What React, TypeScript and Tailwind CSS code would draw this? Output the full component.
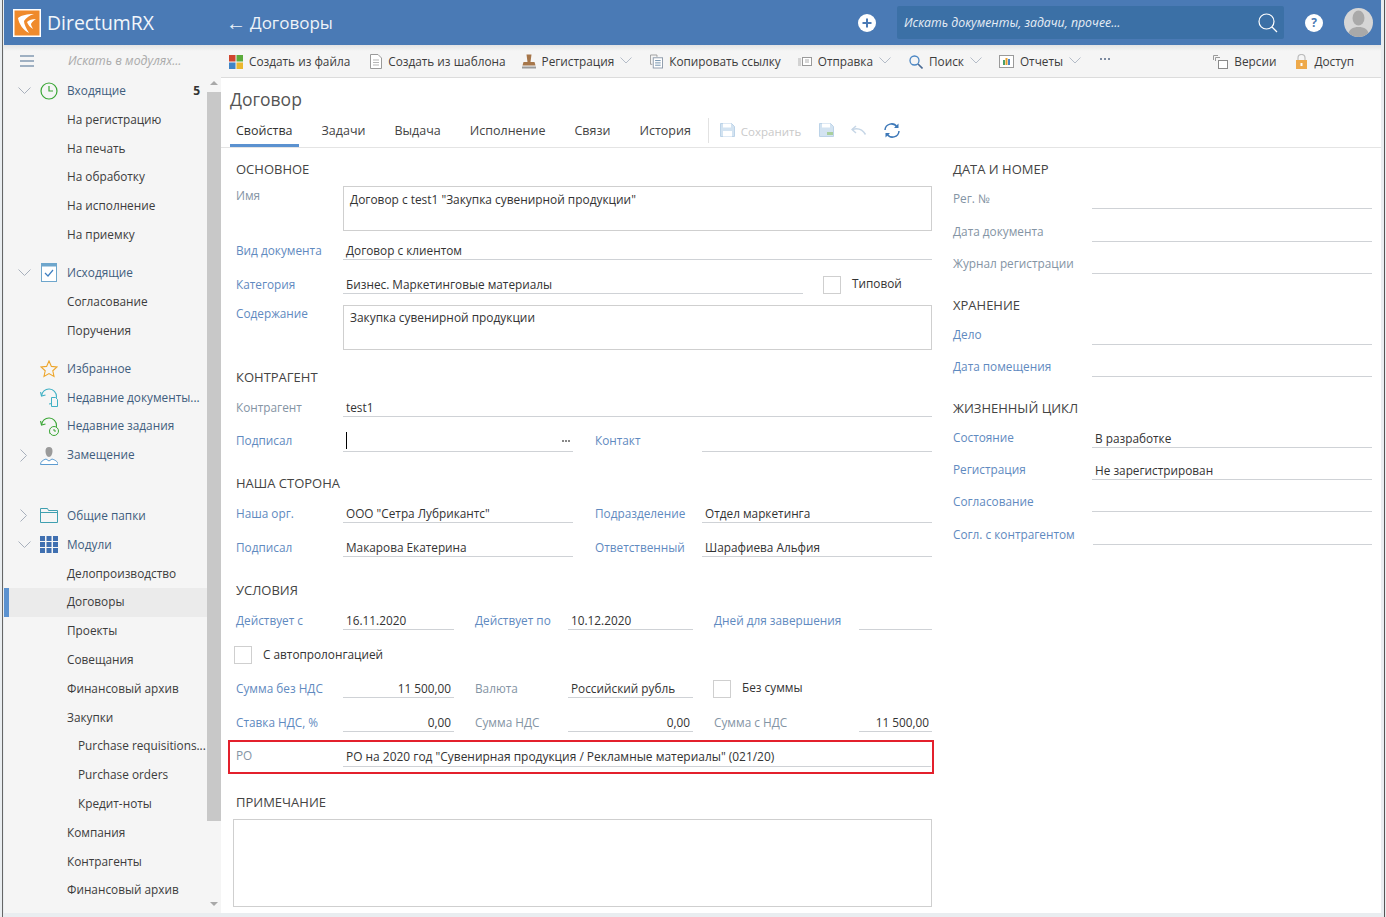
import React from "react";

const Chev = () => <svg width="12" height="7" viewBox="0 0 12 7" className="shrink-0"><path d="M0.5 0.5 6 6l5.5-5.5" fill="none" stroke="#b4bcc8" strokeWidth="1" /></svg>;
const Down = () => <svg width="13" height="8" viewBox="0 0 13 8" className="shrink-0"><path d="M0.5 0.5 6.5 6.5l6-6" fill="none" stroke="#a8b0bc" strokeWidth="1" /></svg>;
const Right = () => <svg width="8" height="13" viewBox="0 0 8 13" className="shrink-0"><path d="M0.5 0.5 6.5 6.5l-6 6" fill="none" stroke="#a8b0bc" strokeWidth="1" /></svg>;

const ICONS: Record<string, React.ReactNode> = {
  clock: <svg width="18" height="18" viewBox="0 0 18 18"><circle cx="9" cy="9" r="8" fill="none" stroke="#3aa635" strokeWidth="1.2" /><path d="M9 4v5h4" fill="none" stroke="#3aa635" strokeWidth="1.2" /></svg>,
  out: <svg width="16" height="19" viewBox="0 0 16 19" className="ml-[1px]"><rect x="0.5" y="0.5" width="15" height="18" fill="#fff" stroke="#6ea6cc" /><rect x="0.5" y="0.5" width="15" height="3" fill="#6ea6cc" /><path d="M4 10l3 3 5-6" fill="none" stroke="#3f7fc0" strokeWidth="1.2" /></svg>,
  star: <svg width="18" height="18" viewBox="0 0 18 18"><path d="M9 1l2.4 5.4 5.6.6-4.2 3.8 1.2 5.7L9 13.6l-5 2.9 1.2-5.7L1 7l5.6-.6z" fill="none" stroke="#eda52a" strokeWidth="1.1" /></svg>,
  recentDoc: <svg width="19" height="19" viewBox="0 0 19 19"><path d="M1.5 8A7.5 7.5 0 1 1 9 16" fill="none" stroke="#3fb0c4" strokeWidth="1.1" /><path d="M0.5 4l1 4 4-1" fill="none" stroke="#3fb0c4" strokeWidth="1.1" /><path d="M11.5 9.5h4l2 2v7h-6z" fill="#f5f5f5" stroke="#3fb0c4" /></svg>,
  recentTask: <svg width="19" height="19" viewBox="0 0 19 19"><path d="M1.5 8A7.5 7.5 0 1 1 9 16" fill="none" stroke="#3aa635" strokeWidth="1.1" /><path d="M0.5 4l1 4 4-1" fill="none" stroke="#3aa635" strokeWidth="1.1" /><circle cx="14" cy="14" r="4.5" fill="#f5f5f5" stroke="#3aa635" /><path d="M14 12v2h2" fill="none" stroke="#3aa635" /></svg>,
  person: <svg width="18" height="19" viewBox="0 0 18 19"><path d="M5.5 5a3.5 4 0 0 1 7 0c0 3-1.5 6-3.5 6S5.500 8 5.500 5z" fill="#9a9a9a" /><path d="M0.5 18.500c0-3 2.500-4.500 5.500-5.500l3 2 3-2c3 1 6 2.500 6 5.500z" fill="#fff" stroke="#5c9bd0" /></svg>,
  folder: <svg width="18" height="15" viewBox="0 0 18 15"><path d="M0.500 0.500h7l1 2h9v12H0.500z" fill="none" stroke="#3f9fb0" /><path d="M0.500 4.500h17" stroke="#3f9fb0" /></svg>,
  grid: <svg width="18" height="17" viewBox="0 0 18 17" fill="#3f6fb0"><rect width="5" height="5" /><rect x="6.500" width="5" height="5" /><rect x="13" width="5" height="5" /><rect y="6" width="5" height="5" /><rect x="6.500" y="6" width="5" height="5" /><rect x="13" y="6" width="5" height="5" /><rect y="12" width="5" height="5" /><rect x="6.500" y="12" width="5" height="5" /><rect x="13" y="12" width="5" height="5" /></svg>,
};

function Nav({ label, icon, arrow, indent = 0, badge, active, cls = "" }: { label: string; icon?: string; arrow?: "d" | "r"; indent?: number; badge?: string; active?: boolean; cls?: string }) {
  return (
    <div className={`relative flex h-[28.8px] shrink-0 items-center ${active ? "bg-[#ebebeb]" : ""} ${cls}`}>
      {active && <div className="absolute left-0 top-0 h-full w-[5px] bg-[#5b92d0]" />}
      <div className="flex w-[35px] shrink-0 justify-center pl-[5px]">{arrow === "d" ? <Down /> : arrow === "r" ? <Right /> : null}</div>
      <div className="flex w-[28px] shrink-0 justify-start pl-[1px]">{icon ? ICONS[icon] : null}</div>
      <span className={`whitespace-nowrap text-[11.8px] ${icon ? "text-[#3f5d7d]" : "text-[#3c3c3c]"} ${indent ? "pl-[11px]" : ""}`}>{label}</span>
      {badge && <span className="absolute right-[7px] text-[12px] font-bold text-[#333]">{badge}</span>}
    </div>
  );
}

function Sidebar() {
  return (
    <div className="flex w-[217px] shrink-0 flex-col overflow-hidden bg-[#f5f5f5]">
      <div className="flex h-[31.4px] shrink-0 items-center bg-[linear-gradient(#e4e4e4,#f5f5f5_6px)]">
        <div className="flex w-[35px] justify-center pl-[10px]"><svg width="14" height="12" viewBox="0 0 14 12" fill="#9fb0c2"><rect width="14" height="2" /><rect y="5" width="14" height="2" /><rect y="10" width="14" height="2" /></svg></div>
        <span className="pl-[29px] pt-[1px] text-[12.300px] italic text-[#ababab]">Искать в модулях...</span>
      </div>
      <div className="flex min-h-0 flex-1">
        <div className="flex w-[203px] flex-col overflow-hidden">
          <Nav label="Входящие" icon="clock" arrow="d" badge="5" />
          <Nav label="На регистрацию" />
          <Nav label="На печать" />
          <Nav label="На обработку" />
          <Nav label="На исполнение" />
          <Nav label="На приемку" />
          <Nav label="Исходящие" icon="out" arrow="d" cls="mt-[9.200px]" />
          <Nav label="Согласование" />
          <Nav label="Поручения" />
          <Nav label="Избранное" icon="star" cls="mt-[9.600px]" />
          <Nav label="Недавние документы..." icon="recentDoc" />
          <Nav label="Недавние задания" icon="recentTask" />
          <Nav label="Замещение" icon="person" arrow="r" />
          <Nav label="Общие папки" icon="folder" arrow="r" cls="mt-[32px]" />
          <Nav label="Модули" icon="grid" arrow="d" />
          <Nav label="Делопроизводство" />
          <Nav label="Договоры" active />
          <Nav label="Проекты" />
          <Nav label="Совещания" />
          <Nav label="Финансовый архив" />
          <Nav label="Закупки" />
          <Nav label="Purchase requisitions..." indent={1} />
          <Nav label="Purchase orders" indent={1} />
          <Nav label="Кредит-ноты" indent={1} />
          <Nav label="Компания" />
          <Nav label="Контрагенты" />
          <Nav label="Финансовый архив" />
        </div>
        <div className="flex w-[14px] shrink-0 flex-col items-center pt-[5px]">
          <div className="h-0 w-0 border-x-[4px] border-b-[4px] border-x-transparent border-b-[#a8a8a8]" />
          <div className="mt-[7px] h-[729px] w-[14px] bg-[#c8c8c8]" />
          <div className="mt-[81px] h-0 w-0 border-x-[4px] border-t-[4px] border-x-transparent border-t-[#a8a8a8]" />
        </div>
      </div>
    </div>
  );
}

function Tool({ icon, label, chev, cls = "" }: { icon: React.ReactNode; label: string; chev?: boolean; cls?: string }) {
  return (
    <div className={`flex shrink-0 items-center ${cls}`}>
      {icon}
      <span className="ml-[6px] pt-[1px] text-[11.8px] text-[#3c3c3c]">{label}</span>
      {chev && <span className="ml-[6px] -mt-[2px]"><Chev /></span>}
    </div>
  );
}

function Toolbar() {
  return (
    <div className="flex h-[33px] shrink-0 items-center border-b border-[#dcdcdc] bg-[linear-gradient(#e4e4e4,#f5f5f5_6px)] pl-[8px] pr-[27px] pt-[1px]">
      <Tool label="Создать из файла" icon={<svg width="14" height="14" viewBox="0 0 14 14"><rect width="6.500" height="6.500" fill="#d0452e" /><rect x="7.500" width="6.500" height="6.500" fill="#5bab3c" /><rect y="7.500" width="6.500" height="6.500" fill="#3f84c6" /><rect x="7.500" y="7.500" width="6.500" height="6.500" fill="#eab72d" /></svg>} />
      <Tool cls="ml-[20px]" label="Создать из шаблона" icon={<svg width="12" height="15" viewBox="0 0 12 15"><path d="M0.500 0.500h7.500l3.500 3.500v10.500H0.500z" fill="#fff" stroke="#9a9a9a" /><path d="M3 6h6M3 8.500h6M3 11h6" stroke="#b5b5b5" /></svg>} />
      <Tool cls="ml-[16px]" chev label="Регистрация" icon={<svg width="14" height="15" viewBox="0 0 14 15"><path d="M4.500 0.500h5L8.500 8h4l1 3.500H0.500L1.500 8h4z" fill="#a6764a" /><rect y="12.500" width="14" height="2" fill="#9a9a9a" /></svg>} />
      <Tool cls="ml-[18px]" label="Копировать ссылку" icon={<svg width="13" height="15" viewBox="0 0 14 15"><path d="M0.500 0.500h7v2" fill="none" stroke="#9a9a9a" /><path d="M0.500 0.500v10h2" fill="none" stroke="#9a9a9a" /><rect x="3.500" y="3.500" width="10" height="11" fill="#fff" stroke="#8a98a8" /><path d="M5.500 6.500h6M5.500 9h6M5.500 11.500h6" stroke="#6a8aa8" /></svg>} />
      <Tool cls="ml-[17px]" chev label="Отправка" icon={<svg width="14" height="10" viewBox="0 0 14 10"><rect x="4.500" y="0.500" width="9" height="8" fill="#fff" stroke="#9a9a9a" /><path d="M7 3h4M7 5h4" stroke="#b0b0b0" /><path d="M0 2h3M0 4h3M0 6h3M0 8h3" stroke="#b0b0b0" /></svg>} />
      <Tool cls="ml-[18px]" chev label="Поиск" icon={<svg width="14" height="14" viewBox="0 0 14 14"><circle cx="5.500" cy="5.500" r="4.500" fill="none" stroke="#4a86c4" strokeWidth="1.300" /><path d="M9 9l4.500 4.500" stroke="#4a6a94" strokeWidth="1.600" /></svg>} />
      <Tool cls="ml-[17px]" chev label="Отчеты" icon={<svg width="15" height="13" viewBox="0 0 15 13"><rect x="0.500" y="0.500" width="14" height="12" fill="#fff" stroke="#9a9a9a" /><rect x="4" y="5" width="2" height="5" fill="#4a9f6a" /><rect x="6.500" y="3" width="2" height="7" fill="#e8a02c" /><rect x="9" y="4" width="2" height="6" fill="#4a86c4" /></svg>} />
      <span className="ml-[19px] flex h-[12px] w-[12px] items-start gap-[2px] pt-[2px]"><i className="h-[2px] w-[2px] bg-[#7c8aa0]" /><i className="h-[2px] w-[2px] bg-[#7c8aa0]" /><i className="h-[2px] w-[2px] bg-[#7c8aa0]" /></span>
      <div className="flex-1" />
      <Tool label="Версии" icon={<svg width="15" height="14" viewBox="0 0 15 14"><path d="M0.500 5V0.500H5M2.500 6V2.500H7" fill="none" stroke="#9a9a9a" /><rect x="5.500" y="5.500" width="9" height="8" fill="#fff" stroke="#8a8a8a" /></svg>} />
      <Tool cls="ml-[19px]" label="Доступ" icon={<svg width="13" height="15" viewBox="0 0 13 15"><path d="M3 7V4a3.500 3.500 0 0 1 7 0v3" fill="none" stroke="#bdbdbd" strokeWidth="1.200" /><rect x="1" y="6" width="11" height="9" fill="#eea94a" /><rect x="5.500" y="9" width="2" height="3" fill="#fff" /></svg>} />
    </div>
  );
}

const Title = ({ children, cls = "" }: { children: React.ReactNode; cls?: string }) => <div className={`h-[20px] text-[13px] leading-[20px] text-[#444] ${cls}`}>{children}</div>;

const LBLUE = "text-[#5f8ac0]";
const LGRAY = "text-[#8494a4]";

function Lbl({ t, w, link, cls = "" }: { t: string; w: number; link?: boolean; cls?: string }) {
  return <div className={`shrink-0 text-[11.800px] leading-[21px] ${link ? LBLUE : LGRAY} ${cls}`} style={{ width: w }}>{t}</div>;
}

function LblR({ t, w, link }: { t: string; w: number; link?: boolean }) {
  return <div className={`shrink-0 text-[11.800px] leading-[19px] ${link ? LBLUE : LGRAY}`} style={{ width: w }}>{t}</div>;
}

function Val({ t, grow, w, right, cursor, dots, size = "text-[11.800px]" }: { t?: string; grow?: boolean; w?: number; right?: boolean; cursor?: boolean; dots?: boolean; size?: string }) {
  return (
    <div className={`relative h-[20px] border-b border-[#cfd2d6] px-[3px] leading-[20px] text-[#333] ${size} ${grow ? "min-w-0 flex-1" : "shrink-0"} ${right ? "text-right" : ""}`} style={w ? { width: w } : undefined}>
      {t}
      {cursor && <span className="absolute left-[3px] top-0 h-[17px] w-px bg-black" />}
      {dots && <span className="absolute right-[3px] top-[8px] flex gap-[1px]"><i className="h-[2px] w-[2px] bg-[#888]" /><i className="h-[2px] w-[2px] bg-[#888]" /><i className="h-[2px] w-[2px] bg-[#888]" /></span>}
    </div>
  );
}

const Row = ({ mt, children }: { mt: string; children: React.ReactNode }) => <div className={`flex h-[20px] ${mt}`}>{children}</div>;
const Box = () => <div className="h-[18px] w-[18px] shrink-0 border border-[#cfcfcf] bg-white" />;

function Area({ t, py }: { t?: string; py: string }) {
  return <div className={`h-[45px] min-w-0 flex-1 border border-[#cfcfcf] px-[6px] text-[11.900px] leading-[18px] text-[#333] ${py}`}>{t}</div>;
}

function LeftCol() {
  return (
    <div className="w-[696px] shrink-0">
      <Title>ОСНОВНОЕ</Title>
      <div className="mt-[7px] flex"><Lbl t="Имя" w={107} cls="-mt-[1px]" /><Area t={'Договор с test1 "Закупка сувенирной продукции"'} py="py-[3px]" /></div>
      <Row mt="mt-[9px]"><Lbl t="Вид документа" w={107} link /><Val grow t="Договор с клиентом" /></Row>
      <Row mt="mt-[14px]"><Lbl t="Категория" w={107} link /><Val w={460} t="Бизнес. Маркетинговые материалы" /><div className="ml-[20px] flex items-end"><Box /></div><span className="ml-[11px] text-[11.800px] leading-[19px] text-[#333]">Типовой</span></Row>
      <div className="mt-[11px] flex"><Lbl t="Содержание" w={107} link cls="-mt-[2px]" /><Area t="Закупка сувенирной продукции" py="py-[2px]" /></div>
      <Title cls="mt-[17px]">КОНТРАГЕНТ</Title>
      <Row mt="mt-[10px]"><Lbl t="Контрагент" w={107} /><Val grow t="test1" /></Row>
      <Row mt="mt-[15px]"><Lbl t="Подписал" w={107} link cls="-mt-[2px]" /><Val w={230} cursor dots /><Lbl t="Контакт" w={107} link cls="ml-[22px] -mt-[2px]" /><Val grow /></Row>
      <Title cls="mt-[21px]">НАША СТОРОНА</Title>
      <Row mt="mt-[10px]"><Lbl t="Наша орг." w={107} link /><Val w={230} t={'ООО "Сетра Лубрикантс"'} /><Lbl t="Подразделение" w={107} link cls="ml-[22px]" /><Val grow t="Отдел маркетинга" /></Row>
      <Row mt="mt-[14px]"><Lbl t="Подписал" w={107} link /><Val w={230} t="Макарова Екатерина" /><Lbl t="Ответственный" w={107} link cls="ml-[22px]" /><Val grow t="Шарафиева Альфия" /></Row>
      <Title cls="mt-[23px]">УСЛОВИЯ</Title>
      <Row mt="mt-[10px]"><Lbl t="Действует с" w={107} link /><Val w={111} t="16.11.2020" /><Lbl t="Действует по" w={93} cls="ml-[21px]" link /><Val w={125} t="10.12.2020" /><Lbl t="Дней для завершения" w={145} cls="ml-[21px]" link /><Val grow /></Row>
      <div className="mt-[16px] -ml-[2px] flex h-[18px] items-center"><Box /><span className="ml-[11px] text-[11.800px] text-[#333]">С автопролонгацией</span></div>
      <Row mt="mt-[14px]"><Lbl t="Сумма без НДС" w={107} link /><Val w={111} right t="11 500,00" /><Lbl t="Валюта" w={93} cls="ml-[21px]" /><Val w={125} t="Российский рубль" /><div className="ml-[20px] flex items-end"><Box /></div><span className="ml-[11px] text-[11.800px] leading-[19px] text-[#333]">Без суммы</span></Row>
      <Row mt="mt-[14px]"><Lbl t="Ставка НДС, %" w={107} link /><Val w={111} right t="0,00" /><Lbl t="Сумма НДС" w={93} cls="ml-[21px]" /><Val w={125} right t="0,00" /><Lbl t="Сумма с НДС" w={145} cls="ml-[21px]" /><Val grow right t="11 500,00" /></Row>
      <div className="mt-[8px] -ml-[8px] flex h-[34px] w-[706px] border-2 border-[#e3202c] pl-[6px] pr-[1px] pt-[5px]"><Lbl t="РО" w={107} cls="-mt-[2px]" /><Val grow size="text-[11.950px]" t={'РО на 2020 год "Сувенирная продукция / Рекламные материалы" (021/20)'} /></div>
      <Title cls="mt-[18px]">ПРИМЕЧАНИЕ</Title>
      <div className="mt-[7px] -ml-[3px] h-[88px] w-[699px] border border-[#cfcfcf]" />
    </div>
  );
}

const RVal = ({ t }: { t?: string }) => <Val grow t={t} />;

function RightCol() {
  return (
    <div className="ml-[21px] w-[419px] shrink-0">
      <Title>ДАТА И НОМЕР</Title>
      <Row mt="mt-[10px]"><LblR t="Рег. №" w={139} /><RVal /></Row>
      <Row mt="mt-[13px]"><LblR t="Дата документа" w={139} /><RVal /></Row>
      <Row mt="mt-[12px]"><LblR t="Журнал регистрации" w={139} /><RVal /></Row>
      <Title cls="mt-[21px]">ХРАНЕНИЕ</Title>
      <Row mt="mt-[10px]"><LblR t="Дело" w={139} link /><RVal /></Row>
      <Row mt="mt-[12px]"><LblR t="Дата помещения" w={139} link /><RVal /></Row>
      <Title cls="mt-[21px]">ЖИЗНЕННЫЙ ЦИКЛ</Title>
      <Row mt="mt-[10px]"><LblR t="Состояние" w={139} link /><RVal t="В разработке" /></Row>
      <Row mt="mt-[12px]"><LblR t="Регистрация" w={139} link /><RVal t="Не зарегистрирован" /></Row>
      <Row mt="mt-[12px]"><LblR t="Согласование" w={139} link /><RVal /></Row>
      <Row mt="mt-[13px]"><LblR t="Согл. с контрагентом" w={140} link /><RVal /></Row>
    </div>
  );
}

function Tab({ t, active, cls = "" }: { t: string; active?: boolean; cls?: string }) {
  return <div className={`flex h-[33px] items-center border-b-[3px] px-[6px] pt-[4px] text-[12.500px] ${active ? "border-[#5b92d0] text-[#333]" : "border-transparent text-[#444]"} ${cls}`}>{t}</div>;
}

function Main() {
  return (
    <div className="flex min-w-0 flex-1 flex-col bg-white">
      <Toolbar />
      <div className="pl-[9px] pt-[9px] text-[17.500px] leading-[24px] text-[#555]">Договор</div>
      <div className="mt-[3px] flex h-[34px] items-start border-b border-[#e4e4e4] pl-[9px]">
        <Tab t="Свойства" active />
        <Tab t="Задачи" cls="ml-[17px]" />
        <Tab t="Выдача" cls="ml-[17px]" />
        <Tab t="Исполнение" cls="ml-[17px]" />
        <Tab t="Связи" cls="ml-[17px]" />
        <Tab t="История" cls="ml-[17px]" />
        <div className="ml-[11px] mt-[4px] h-[25px] w-px bg-[#e2e2e2]" />
        <div className="flex h-[33px] items-center pb-[1px]">
          <svg className="ml-[11px]" width="15" height="14" viewBox="0 0 15 14"><path d="M0.500 0.500h11l3 3v10H0.500z" fill="#d3e3f1" stroke="#bcd3e8" /><rect x="3" y="0.500" width="8" height="4" fill="#fff" /><rect x="3" y="8" width="9" height="5.500" fill="#fff" /></svg>
          <span className="ml-[6px] pt-[3px] text-[11.500px] text-[#c9c9c9]">Сохранить</span>
          <svg className="ml-[18px]" width="15" height="14" viewBox="0 0 15 14"><path d="M0.500 0.500h11l3 3v10H0.500z" fill="#d3e3f1" stroke="#bcd3e8" /><rect x="3" y="0.500" width="8" height="4" fill="#fff" /><rect x="8" y="9" width="6" height="3" fill="#a9cf9c" /></svg>
          <svg className="ml-[17px]" width="16" height="10" viewBox="0 0 16 10"><path d="M5 1 1 4.500 5 8" fill="none" stroke="#c6d6e6" strokeWidth="1.500" /><path d="M1.500 4.500c5 -1.500 10 0 13 5" fill="none" stroke="#c6d6e6" strokeWidth="1.500" /></svg>
          <svg className="ml-[17px]" width="16" height="15" viewBox="0 0 16 15"><path d="M1 7A6.500 6.500 0 0 1 13 4" fill="none" stroke="#3d78b8" strokeWidth="1.500" /><path d="M14.500 0.500V5H10" fill="#3d78b8" /><path d="M15 8A6.500 6.500 0 0 1 3 11" fill="none" stroke="#3d78b8" strokeWidth="1.500" /><path d="M1.500 14.500V10H6" fill="#3d78b8" /></svg>
        </div>
      </div>
      <div className="flex pl-[15px] pt-[11px]">
        <LeftCol />
        <RightCol />
      </div>
    </div>
  );
}

function Header() {
  return (
    <div className="flex h-[45px] shrink-0 items-center bg-[#4a7ab5] pl-[9px] pr-[8px]">
      <svg width="28" height="28" viewBox="0 0 28 28"><rect width="28" height="28" fill="#fff" /><rect x="1.500" y="1.500" width="25" height="25" fill="#ef8a2c" /><path d="M21 5C14 5 9 6 5 9c1 6 5 12 11 15-3-5-5-9-5-12 2-3 6-6 10-7z" fill="#fff" /><path d="M23 10c-4 0-7 1-9 3 1 3 3 5 6 7-1-2-2-4-2-5 1-2 3-4 5-5z" fill="#fff" /></svg>
      <span className="ml-[6px] text-[19.400px] text-[#f2f6fb]">DirectumRX</span>
      <span className="ml-[72px] text-[20px] leading-[24px] text-[#eef3f9]" style={{ fontFamily: '"Liberation Sans", sans-serif' }}>←</span>
      <span className="ml-[4px] text-[17px] text-[#eef3f9]">Договоры</span>
      <div className="flex-1" />
      <svg width="18" height="18" viewBox="0 0 18 18"><circle cx="9" cy="9" r="9" fill="#fff" /><path d="M9 4.500v9M4.500 9h9" stroke="#4a7ab5" strokeWidth="2" /></svg>
      <div className="ml-[21px] flex h-[33px] w-[387px] items-center justify-between rounded-[2px] bg-[#3b70a6] pl-[7px] pr-[6px]">
        <span className="pt-[1px] text-[12.300px] italic text-[#e6edf5]">Искать документы, задачи, прочее...</span>
        <svg width="20" height="20" viewBox="0 0 20 20"><circle cx="8.500" cy="8.500" r="7.500" fill="none" stroke="#fff" strokeWidth="1.200" /><path d="M14 14l5 5" stroke="#fff" strokeWidth="1.200" /></svg>
      </div>
      <div className="ml-[21px] flex h-[18px] w-[18px] items-center justify-center rounded-full bg-white text-[12px] font-bold text-[#4a7ab5]">?</div>
      <div className="ml-[21px] flex h-[29px] w-[29px] items-center justify-center overflow-hidden rounded-full bg-[#d6d6d6]">
        <svg width="29" height="29" viewBox="0 0 29 29"><ellipse cx="14.500" cy="10" rx="6" ry="7.500" fill="#a9a9a9" /><path d="M4 29c0-8 5-10 10.500-10S25 21 25 29z" fill="#a9a9a9" /></svg>
      </div>
    </div>
  );
}

export default function App() {
  return (
    <div className="flex h-[917px] w-[1386px] overflow-hidden bg-[#e9edf0] pl-[2px]" style={{ fontFamily: '"Open Sans", "Noto Sans", sans-serif' }}>
      <div className="flex min-w-0 flex-1 border-r border-[#555] pr-[3px]">
        <div className="flex min-w-0 flex-1 border-l border-[#666] pl-[1px] pb-[4px]">
          <div className="flex min-w-0 flex-1 flex-col">
            <Header />
            <div className="flex min-h-0 flex-1">
              <Sidebar />
              <Main />
            </div>
          </div>
        </div>
      </div>
      <div className="w-px shrink-0 bg-[#e9edf0]" />
    </div>
  );
}
